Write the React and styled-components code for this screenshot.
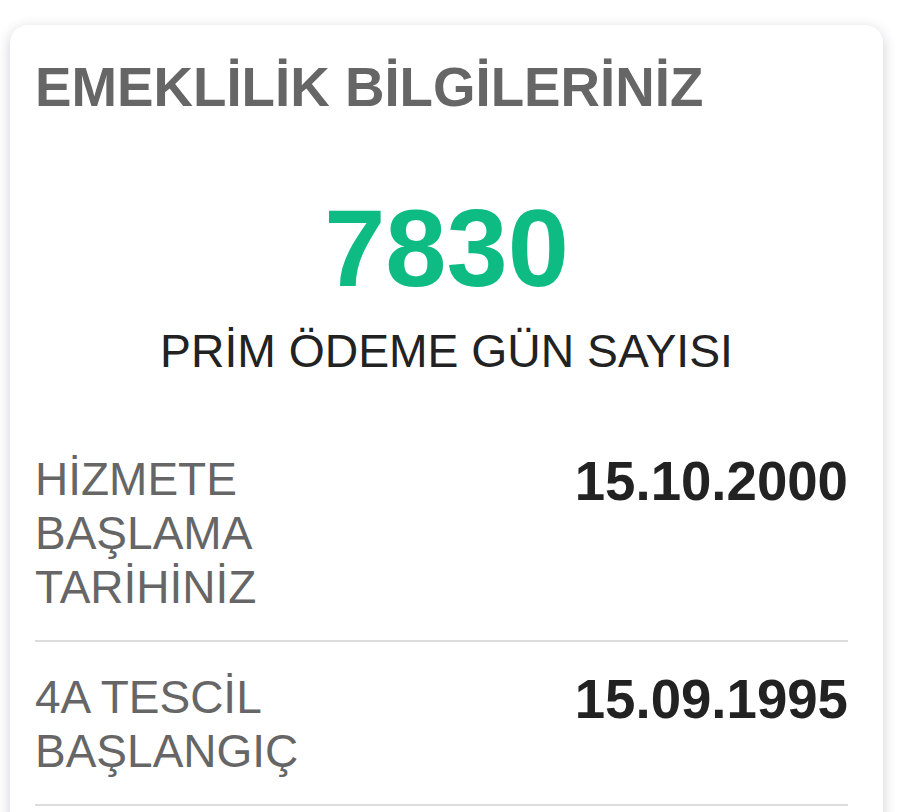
import styled, { createGlobalStyle } from "styled-components";

const GlobalStyle = createGlobalStyle`
  html, body {
    margin: 0;
    padding: 0;
    background: #fff;
    font-family: "Liberation Sans", Arial, sans-serif;
  }
`;

const rows = [
  { label: "HİZMETE BAŞLAMA TARİHİNİZ", value: "15.10.2000" },
  { label: "4A TESCİL BAŞLANGIÇ", value: "15.09.1995" },
];

export default function App() {
  return (
    <>
      <GlobalStyle />
      <Page>
        <Card>
          <Title>EMEKLİLİK BİLGİLERİNİZ</Title>
          <Summary>
            <BigNumber>7830</BigNumber>
            <Caption>PRİM ÖDEME GÜN SAYISI</Caption>
          </Summary>
          {rows.map((row) => (
            <Row key={row.label}>
              <Label>{row.label}</Label>
              <Value>{row.value}</Value>
            </Row>
          ))}
        </Card>
      </Page>
    </>
  );
}

const Page = styled.div`
  padding: 25px 24px 0 10px;
  overflow: hidden;
  height: 812px;
  box-sizing: border-box;
`;

const Card = styled.div`
  background: #fff;
  border-radius: 18px;
  box-shadow: 0 4px 14px rgba(50, 50, 90, 0.24);
  padding: 30px 25px 40px 25px;
`;

const Title = styled.div`
  color: #666;
  font-size: 54.7px;
  font-weight: 700;
  line-height: 64px;
`;

const Summary = styled.div`
  display: flex;
  flex-direction: column;
  align-items: center;
  margin-top: 69px;
  margin-bottom: 47px;
`;

const BigNumber = styled.div`
  color: #0ebc83;
  font-size: 110px;
  font-weight: 700;
  line-height: 120px;
`;

const Caption = styled.div`
  color: #222;
  font-size: 46.3px;
  line-height: 52px;
  margin-top: 17px;
`;

const Row = styled.div`
  display: flex;
  justify-content: space-between;
  align-items: flex-start;
  margin-right: 10px;
  padding: 28px 0 26px;
  border-bottom: 2px solid #ddd;
`;

const Label = styled.div`
  width: 45%;
  color: #666;
  font-size: 46px;
  line-height: 54px;
`;

const Value = styled.div`
  color: #222;
  font-size: 54.6px;
  font-weight: 700;
  line-height: 54px;
  margin-top: 3px;
`;
